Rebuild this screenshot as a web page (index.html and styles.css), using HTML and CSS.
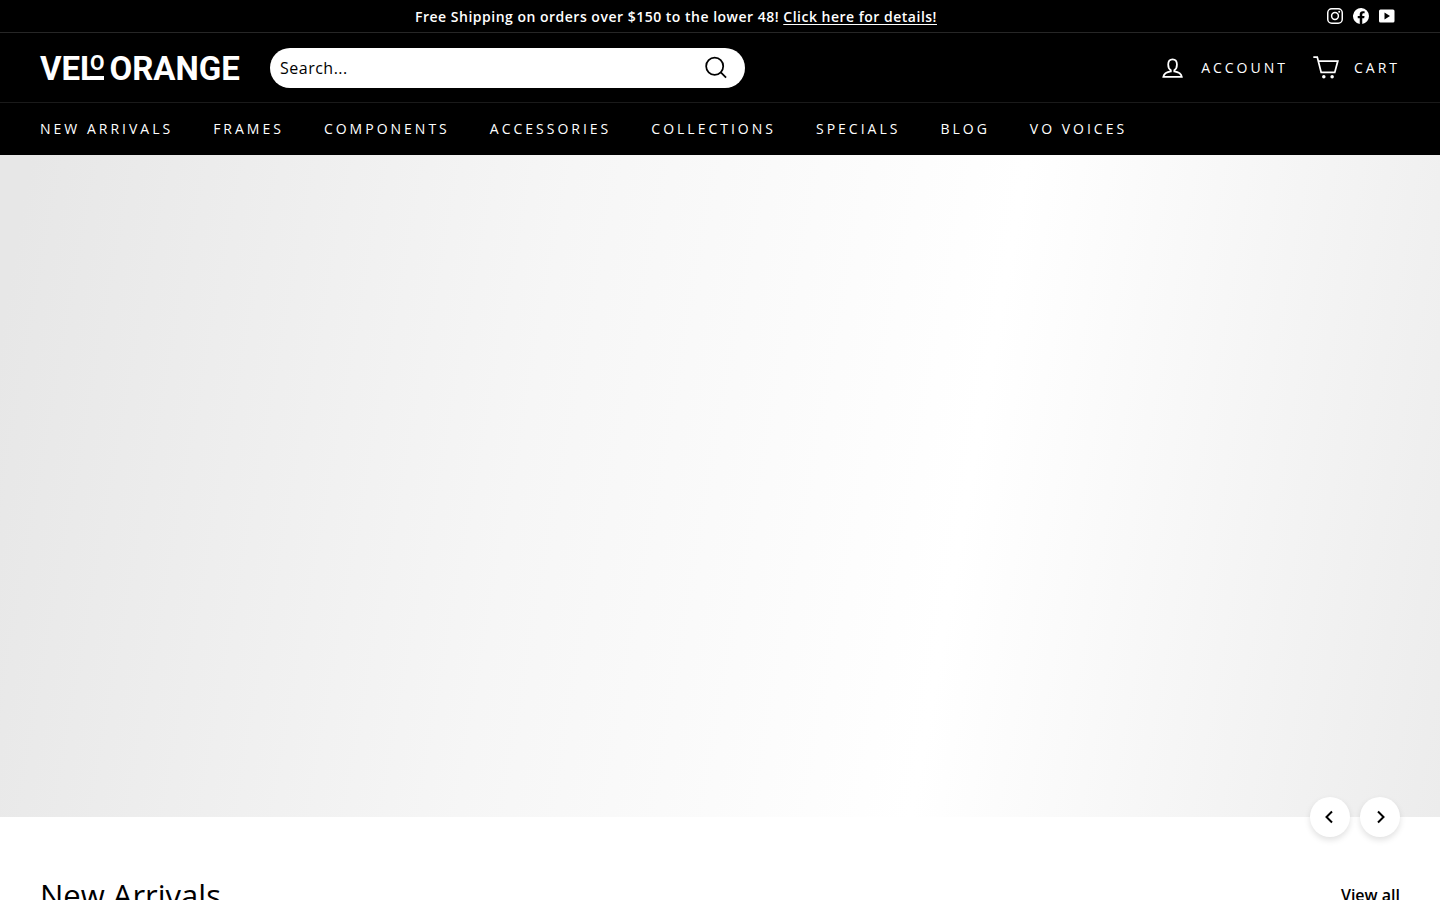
FILE: index.html
```html
<!DOCTYPE html>
<html lang="en">

<head>
    <meta charset="UTF-8">
    <meta name="viewport" content="width=device-width, initial-scale=1.0">
    <title>Velo Orange</title>
    <link rel="stylesheet" href="styles.css">
</head>

<body>
    <header class="header">
        <div class="toolbar">
            <p class="toolbar__text">Free Shipping on orders over $150 to the lower 48! <a href="#">Click here for details!</a></p>
            <ul class="social">
                <li>
                    <a href="#" aria-label="Instagram">
                        <svg viewBox="0 0 32 32" width="16" height="16" fill="none" stroke="currentColor" stroke-width="3">
                            <rect x="1.5" y="1.5" width="29" height="29" rx="8" />
                            <circle cx="16" cy="16" r="6.8" />
                            <circle cx="24.4" cy="7.6" r="2" fill="currentColor" stroke="none" />
                        </svg>
                    </a>
                </li>
                <li>
                    <a href="#" aria-label="Facebook">
                        <svg viewBox="0 0 24 24" width="16" height="16" fill="currentColor">
                            <path d="M24 12a12 12 0 1 0-13.9 11.9v-8.4H7.1V12h3V9.4c0-3 1.8-4.7 4.6-4.7 1.3 0 2.7.2 2.7.2v3h-1.5c-1.5 0-2 .9-2 1.9V12h3.4l-.5 3.5h-2.9v8.4A12 12 0 0 0 24 12z" />
                        </svg>
                    </a>
                </li>
                <li>
                    <a href="#" aria-label="YouTube">
                        <svg viewBox="0 0 32 32" width="16" height="16" fill="currentColor" fill-rule="evenodd">
                            <path d="M3 3h25q3 0 3 3v20q0 3-3 3H3q-3 0-3-3V6q0-3 3-3zM11 9v14l11-7z" />
                        </svg>
                    </a>
                </li>
            </ul>
        </div>

        <div class="main-bar">
            <a href="#" class="logo" aria-label="Velo Orange">
                <span>VEL</span><span class="logo__small">O</span><span class="logo__word">ORANGE</span>
            </a>
            <form class="search">
                <input type="text" class="search__input" placeholder="Search..." aria-label="Search">
                <button type="submit" class="search__button" aria-label="Search">
                    <svg viewBox="0 0 64 64" width="28" height="28" fill="none" stroke="currentColor" stroke-width="4">
                        <circle cx="29" cy="28" r="19.5" />
                        <path d="M43 42l12 12" />
                    </svg>
                </button>
            </form>
            <div class="user-links">
                <a href="#" class="user-links__item">
                    <svg viewBox="0 0 64 64" width="28" height="28" fill="none" stroke="currentColor" stroke-width="4">
                        <path d="M35 39.8v-2.6c4-2.6 6-7.7 6-13.2 0-8-3.5-12-10-12s-10 4-10 12c0 5.5 2 10.6 6 13.2v2.6c-10 1.5-15.5 4.2-17 12.2h42c-1.5-8-7-10.7-17-12.2z" />
                    </svg>
                    <span>Account</span>
                </a>
                <a href="#" class="user-links__item">
                    <svg viewBox="0 0 64 64" width="28" height="28" fill="none" stroke="currentColor" stroke-width="4">
                        <path d="M3 7h9l9 35h31l7-26H14" />
                        <circle cx="27" cy="52" r="4" fill="currentColor" stroke="none" />
                        <circle cx="46" cy="52" r="4" fill="currentColor" stroke="none" />
                    </svg>
                    <span>Cart</span>
                </a>
            </div>
        </div>

        <nav class="nav">
            <a href="#">New Arrivals</a>
            <a href="#">Frames</a>
            <a href="#">Components</a>
            <a href="#">Accessories</a>
            <a href="#">Collections</a>
            <a href="#">Specials</a>
            <a href="#">Blog</a>
            <a href="#">VO Voices</a>
        </nav>
    </header>

    <main>
        <section class="hero" aria-label="Slideshow">
            <div class="hero__arrows">
                <button type="button" aria-label="Previous">
                    <svg viewBox="0 0 12 14" width="12" height="14" fill="none" stroke="currentColor" stroke-width="2">
                        <path d="M8 1.5L2.5 7 8 12.5" />
                    </svg>
                </button>
                <button type="button" aria-label="Next">
                    <svg viewBox="0 0 12 14" width="12" height="14" fill="none" stroke="currentColor" stroke-width="2">
                        <path d="M4 1.5L9.5 7 4 12.5" />
                    </svg>
                </button>
            </div>
        </section>

        <section class="collection">
            <h2>New Arrivals</h2>
            <a href="#">View all</a>
        </section>
    </main>
</body>

</html>
```
FILE: styles.css
```css
* {
    margin: 0;
    padding: 0;
    box-sizing: border-box;
}

body {
    background: #fff;
    color: #000;
    font-family: "Open Sans", sans-serif;
    font-size: 16px;
}

a {
    color: inherit;
    text-decoration: none;
}

svg {
    display: block;
}

button {
    border: 0;
    background: none;
    color: inherit;
    cursor: pointer;
}

.header {
    background: #000;
    color: #fff;
}

.toolbar {
    display: flex;
    align-items: center;
    gap: 10px;
    height: 33px;
    padding: 0 40px;
    border-bottom: 1px solid #262626;
}

.toolbar__text {
    flex: 1;
    padding-top: 2px;
    text-align: center;
    font-size: 14px;
    font-weight: 600;
    line-height: 20px;
    letter-spacing: 0.5px;
}

.toolbar__text a {
    text-decoration: underline;
    text-underline-offset: 2px;
}

.social {
    display: flex;
    list-style: none;
}

.social li {
    padding: 0 5px;
}

.main-bar {
    display: flex;
    align-items: center;
    height: 70px;
    padding: 0 40px;
    border-bottom: 1px solid #1a1a1a;
}

.logo {
    display: flex;
    align-items: flex-start;
    width: 200px;
    height: 26px;
    margin-right: 30px;
    font-family: Roboto, sans-serif;
    font-size: 33px;
    font-weight: 700;
    line-height: 28px;
}

/* the small O sits on the foot of the L */
.logo__small {
    height: 25px;
    margin-left: -8px;
    border-bottom: 4px solid #fff;
    font-size: 21px;
    line-height: 16px;
}

.logo__word {
    margin-left: 5px;
}

.search {
    display: flex;
    align-items: center;
    flex: 0 1 475px;
    height: 40px;
    background: #fff;
    border-radius: 20px;
    color: #000;
}

.search__input {
    flex: 1;
    height: 40px;
    padding: 0 10px;
    border: 0;
    background: none;
    font-family: inherit;
    font-size: 16px;
    letter-spacing: 0.5px;
    outline: none;
}

.search__input::placeholder {
    color: #000;
}

.search__button {
    margin-right: 15px;
}

.user-links {
    display: flex;
    gap: 24px;
    margin-left: auto;
}

.user-links__item {
    display: flex;
    align-items: center;
    gap: 14px;
}

.user-links__item,
.nav {
    font-size: 14px;
    line-height: 20px;
    letter-spacing: 3px;
    text-transform: uppercase;
}

.nav {
    display: flex;
    align-items: center;
    gap: 40px;
    height: 52px;
    padding: 0 40px;
}

.hero {
    position: relative;
    height: calc(100vh - 238px);
    background: linear-gradient(100deg, #e7e7e7 2%, #f6f6f6 37%, #fff 66%, #ececec 100%);
}

.hero__arrows {
    position: absolute;
    right: 40px;
    bottom: -20px;
    display: flex;
    gap: 10px;
}

.hero__arrows button {
    display: flex;
    align-items: center;
    justify-content: center;
    width: 40px;
    height: 40px;
    border-radius: 50%;
    background: #fff;
    box-shadow: 0 3px 6px rgba(0, 0, 0, 0.12);
}

.collection {
    display: flex;
    align-items: center;
    justify-content: space-between;
    padding: 58px 40px 40px;
}

.collection h2 {
    font-size: 31px;
    font-weight: 400;
    line-height: 40px;
}

.collection a {
    font-weight: 600;
}
```
